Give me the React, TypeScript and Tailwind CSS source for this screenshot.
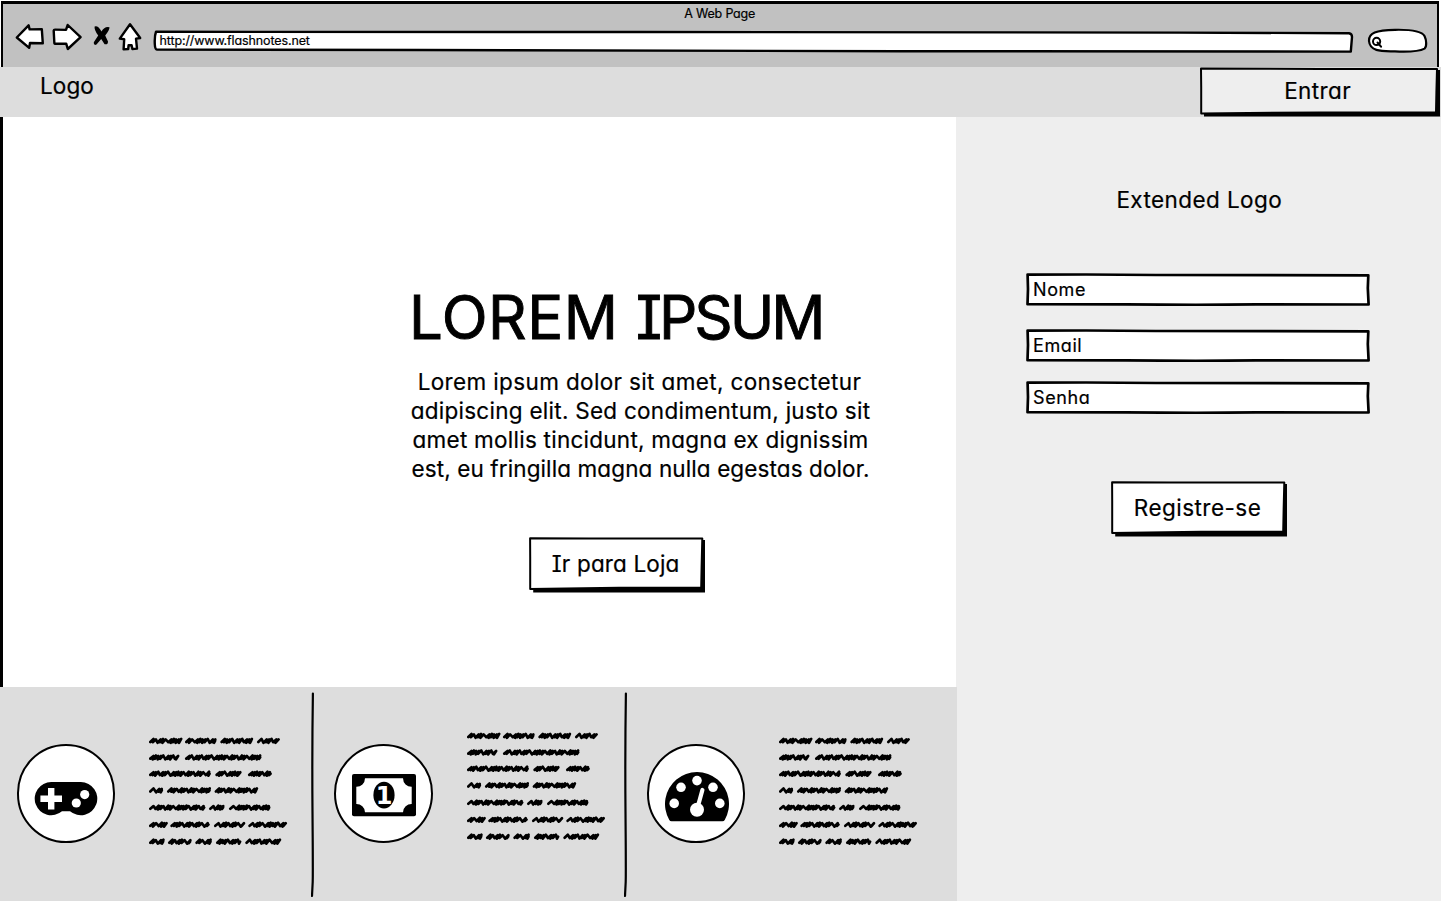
import type { ReactNode } from "react";

type Word = [number, number];

const SCRIBBLE: Word[][] = [
  [[0, 97], [108, 202], [214, 310], [324, 388]],
  [[0, 88], [108, 337]],
  [[0, 185], [199, 274], [297, 368]],
  [[0, 42], [54, 185], [197, 325]],
  [[0, 169], [180, 226], [240, 364]],
  [[0, 52], [64, 182], [195, 285], [298, 410]],
  [[0, 46], [57, 127], [139, 188], [201, 277], [289, 392]],
];
const SCRIBBLE_Y = [6.8, 23.4, 39.7, 56.3, 73.5, 90.6, 107.6];
const STEPS = [2.4, 4.8, 2.3, 2.6, 5.8, 2.4, 2.2, 2.9, 2.3, 5.2, 2.4];

function wordPath(start: number, end: number, y: number, seed: number) {
  let x = start / 3 + 1.3;
  const last = end / 3 - 2.8;
  let d = `M${x} ${y + 1.2}`;
  let i = seed;
  while (x < last) {
    const step = STEPS[i % STEPS.length];
    const lift = i % 3 === 0 ? 1.9 : 1.4;
    d += ` L${(x + 3.2).toFixed(1)} ${(y - lift).toFixed(1)}`;
    x = Math.min(x + step, last + 0.5);
    d += ` L${x.toFixed(1)} ${(y + (i % 2 ? 2 : 1.4)).toFixed(1)}`;
    i += 1;
  }
  d += ` L${(last + 1.6).toFixed(1)} ${y}`;
  return d;
}

function Scribble({ className }: { className: string }) {
  return (
    <svg width="140" height="116" viewBox="0 0 140 116" className={`block shrink-0 ${className}`}>
      {SCRIBBLE.map((words, row) =>
        words.map(([a, b], n) => (
          <path
            key={`${row}-${n}`}
            d={wordPath(a, b, SCRIBBLE_Y[row], row * 5 + n * 3)}
            fill="none"
            stroke="#000"
            strokeWidth="2.7"
            strokeLinecap="round"
            strokeLinejoin="round"
          />
        )),
      )}
    </svg>
  );
}

function Gamepad() {
  return (
    <svg width="64" height="36" viewBox="0 0 64 36" className="mt-[35px] block shrink-0">
      <path d="M17.2 1H46.8A16.6 16.6 0 1 1 36 30.3H28A16.6 16.6 0 1 1 17.2 1Z" fill="#000" />
      <path d="M14 7h6.4v7.6h7.6v6.4h-7.6v7.6H14v-7.6H6.4v-6.4H14Z" fill="#fff" />
      <circle cx="42.3" cy="22" r="4.6" fill="#fff" />
      <circle cx="50.7" cy="13.6" r="4.6" fill="#fff" />
    </svg>
  );
}

function Money() {
  return (
    <svg width="64" height="43" viewBox="0 0 64 43" className="mt-[28px] ml-[1.4px] block shrink-0">
      <rect width="64" height="42.3" rx="2" fill="#000" />
      <path d="M13 4.3H51A8.5 8.5 0 0 0 59.7 12.8V30A8.5 8.5 0 0 0 51 38.2H13A8.5 8.5 0 0 0 4.3 30V12.8A8.5 8.5 0 0 0 13 4.3Z" fill="#fff" />
      <ellipse cx="32" cy="21.1" rx="10.6" ry="13.4" fill="#000" />
      <text x="32.2" y="29.8" textAnchor="middle" fontFamily="DejaVu Sans" fontWeight="bold" fontSize="24" fill="#fff">
        1
      </text>
    </svg>
  );
}

function Gauge() {
  return (
    <svg width="64" height="51" viewBox="0 0 64 51" className="mt-[24.5px] ml-[1.4px] block shrink-0">
      <path d="M6.5 50.3Q5 50.3 4.3 49A32 32 0 1 1 59.7 49Q59 50.3 57.5 50.3Z" fill="#000" />
      <g fill="#fff">
        <circle cx="9.2" cy="32.4" r="4.8" />
        <circle cx="16" cy="16.3" r="4.8" />
        <circle cx="32" cy="9.6" r="4.8" />
        <circle cx="48" cy="16.3" r="4.8" />
        <circle cx="54.8" cy="32.4" r="4.8" />
        <circle cx="32" cy="38.8" r="7" />
      </g>
      <path d="M33 35L37.4 19" stroke="#fff" strokeWidth="4.2" strokeLinecap="round" />
    </svg>
  );
}

function Feature({ icon, className, textClass }: { icon: ReactNode; className: string; textClass: string }) {
  return (
    <section className={`flex shrink-0 items-start ${className}`}>
      <div className="mt-[57.4px] mr-[34px] flex size-[98.4px] shrink-0 items-start justify-center rounded-full border-2 border-black bg-white">
        {icon}
      </div>
      <Scribble className={textClass} />
    </section>
  );
}

function Divider() {
  return (
    <svg width="4" height="206" viewBox="0 0 4 206" className="mt-[5px] block shrink-0">
      <path d="M1.9 1.6Q1 60 1.5 120T1.7 190L1 204" fill="none" stroke="#000" strokeWidth="2.2" strokeLinecap="round" />
    </svg>
  );
}

function Field({ label, className }: { label: string; className: string }) {
  return (
    <div className={`relative h-[33px] w-[344px] ${className}`}>
      <svg width="344" height="33" viewBox="0 0 344 33" className="absolute inset-0">
        <path
          d="M1.6 1.6L60 1.5L130 2L342.3 2.3L341.8 15L342.6 31.5L230 31.4L170 31.9L100 31.4L1.5 31.2L2 16Z"
          fill="#fff"
          stroke="#000"
          strokeWidth="2.7"
          strokeLinejoin="round"
        />
      </svg>
      <span className="relative ml-[7px] block text-[18px] leading-[33px] tracking-[0.6px] whitespace-nowrap">{label}</span>
    </div>
  );
}

function Button({ label, className, textClass }: { label: string; className: string; textClass: string }) {
  return (
    <div className={`relative h-[55px] w-[177px] ${className}`}>
      <svg width="177" height="56" viewBox="0 0 177 56" className="absolute inset-0">
        <path d="M4.2 3H176V55.6H4.2Z" fill="#000" />
        <path
          d="M1.1 1.2L60 1.6L173.3 1.6L172.6 30L172.2 50.8L90 50.8L1.2 52L1.2 20Z"
          fill="#fff"
          stroke="#000"
          strokeWidth="2"
          strokeLinejoin="round"
        />
      </svg>
      <span className={`relative block pl-[22.8px] text-[22.5px] leading-[53px] whitespace-nowrap ${textClass}`}>{label}</span>
    </div>
  );
}

function Toolbar() {
  const sketch = { fill: "#fff", stroke: "#000", strokeWidth: 2.4, strokeLinejoin: "round" as const, strokeLinecap: "round" as const };
  return (
    <div className="flex h-8 items-start pl-[9.5px]">
      <svg width="33" height="32" viewBox="13 22 33 32" className="shrink-0">
        <path d="M16.8 37.5L28.6 25.3L29.6 29.4L41.8 29.2L42.8 43.3L30 43L29.2 47.8Z" {...sketch} />
      </svg>
      <svg width="36" height="32" viewBox="50 22 36 32" className="ml-1 shrink-0">
        <path d="M53.7 30.6Q53.8 29.6 55 29.6L66 29.9L67.7 25L80.6 37.2L67.8 49L66.2 43.6L55 43.8Q54.2 43.8 54.3 42Z" {...sketch} />
      </svg>
      <svg width="22" height="32" viewBox="91 22 22 32" className="ml-[5px] shrink-0">
        <path d="M94.6 26.6Q98 25.2 101.5 31.5Q104.5 26 109.5 27.2Q109.6 30 105.2 35.4L108 41.5Q108 45 104.6 44.2L101.2 39L96.5 44.6Q93.4 46 93.8 42.2L98.2 35.6Q94 30 94.6 26.6Z" fill="#000" />
      </svg>
      <svg width="28" height="32" viewBox="116 22 28 32" className="ml-[3px] shrink-0">
        <path d="M130 24.2L140.2 38L136 38.6L137 48.6L132.4 49L131.6 45.2L128.6 45.2L128.2 49L123.6 49.4L124.2 39.2L119.8 38.6Z" {...sketch} />
      </svg>
      <div className="relative ml-2 h-8 w-[1204px] shrink-0">
        <svg width="1204" height="32" viewBox="152 22 1204 32" className="absolute inset-0">
          <path
            d="M156 31.8L640 32L1180 32.6L1349 33.2Q1352 33.5 1352 37L1350.8 51.6L900 51.2L420 50L157 49.6Q155 49.4 154.8 44Q154.4 36 156 31.8Z"
            fill="#fff"
            stroke="#000"
            strokeWidth="2.4"
            strokeLinejoin="round"
          />
        </svg>
        <span className="relative ml-2 block pt-[8px] text-[12.5px] leading-[21px] tracking-[-0.12px] whitespace-nowrap">
          http://www.flashnotes.net
        </span>
      </div>
      <svg width="64" height="32" viewBox="1365 22 64 32" className="ml-[9px] shrink-0">
        <path
          d="M1369 41C1368.5 33 1376 30.2 1395 29.8C1410 29.5 1422 31.5 1424.5 36C1426.5 40 1427 46.5 1424.5 48.6C1420 51 1408 52 1395 51.4C1384 51 1370 52.5 1369 41Z"
          {...sketch}
          strokeWidth="2.2"
        />
        <circle cx="1376.6" cy="41.4" r="3.6" fill="#fff" stroke="#000" strokeWidth="2" />
        <path d="M1377.6 42.6L1381 46.6" stroke="#000" strokeWidth="2.2" strokeLinecap="round" />
      </svg>
    </div>
  );
}

export default function App() {
  return (
    <div className="flex h-[901px] w-[1441px] flex-col overflow-hidden bg-white font-['Inter',sans-serif] text-black [font-feature-settings:'cv11','cv08'] [-webkit-text-stroke:0.2px_#000]">
      <header className="h-[67px] shrink-0 pt-[0.5px] pr-[2px] pl-px">
        <div className="h-full border-x-[2.5px] border-t-[3px] border-black bg-[#c1c1c1]">
          <div className="h-[18.5px] pl-[681.3px] text-[12.5px] leading-[20px] tracking-[-0.2px] whitespace-nowrap">A Web Page</div>
          <Toolbar />
        </div>
      </header>

      <nav className="flex h-[50px] shrink-0 justify-between bg-[#ddd]">
        <span className="pl-[40px] text-[22.5px] leading-[37px] tracking-[0.1px]">Logo</span>
        <div className="relative h-[50px] w-[241px]">
          <svg width="241" height="50" viewBox="0 0 241 50" className="absolute inset-0">
            <path d="M4 3H240V49.6H4Z" fill="#000" />
            <path
              d="M1 1.6L120 2L237 2L236.4 25L236 45.2L120 45.4L1.2 46.4L1.2 20Z"
              fill="#eee"
              stroke="#000"
              strokeWidth="2"
              strokeLinejoin="round"
            />
          </svg>
          <span className="relative block pl-[84.2px] text-[22.5px] leading-[47px] tracking-[0.4px]">Entrar</span>
        </div>
      </nav>

      <main className="flex h-[784px] bg-[#eee]">
        <div className="w-[957px] shrink-0">
          <section className="h-[570px] w-[956px] border-l-[3px] border-black bg-white pt-[170px]">
            <h1 className="ml-[406px] text-[60px] leading-[60px] whitespace-nowrap [-webkit-text-stroke:0.9px_#000]">
              <span className="tracking-[0.5px]">LOREM</span>
              <span className="tracking-[0.3px]"> </span>
              <span className="tracking-[-3.1px]">IPSUM</span>
            </h1>
            <div className="mt-5 ml-[397.5px] w-[480px] text-center text-[22.5px] leading-[29px] whitespace-nowrap">
              <div className="pr-[2px] tracking-[0.36px]">Lorem ipsum dolor sit amet, consectetur</div>
              <div className="tracking-[0.27px]">adipiscing elit. Sed condimentum, justo sit</div>
              <div className="tracking-[0.25px]">amet mollis tincidunt, magna ex dignissim</div>
              <div className="tracking-[0.11px]">est, eu fringilla magna nulla egestas dolor.</div>
            </div>
            <Button label="Ir para Loja" className="mt-[54px] ml-[526px]" textClass="tracking-[0.15px]" />
          </section>

          <section className="flex h-[214px] items-start bg-[#ddd]">
            <Feature icon={<Gamepad />} className="w-[311px] pl-[16.5px]" textClass="mt-[46.5px]" />
            <Divider />
            <Feature icon={<Money />} className="w-[309px] pl-[19.3px]" textClass="mt-[42px]" />
            <Divider />
            <Feature icon={<Gauge />} className="w-[329px] pl-[19.1px]" textClass="mt-[46.5px]" />
          </section>
        </div>

        <aside className="flex w-[484px] shrink-0 flex-col pt-[68px] pl-[69px]">
          <h2 className="ml-[90.4px] text-[22.5px] leading-[29px] tracking-[0.42px]">Extended Logo</h2>
          <Field label="Nome" className="mt-[59px]" />
          <Field label="Email" className="mt-[23px]" />
          <Field label="Senha" className="mt-[19px]" />
          <Button label="Registre-se" className="mt-[67px] ml-[85px]" textClass="tracking-[0.47px]" />
        </aside>
      </main>
    </div>
  );
}
